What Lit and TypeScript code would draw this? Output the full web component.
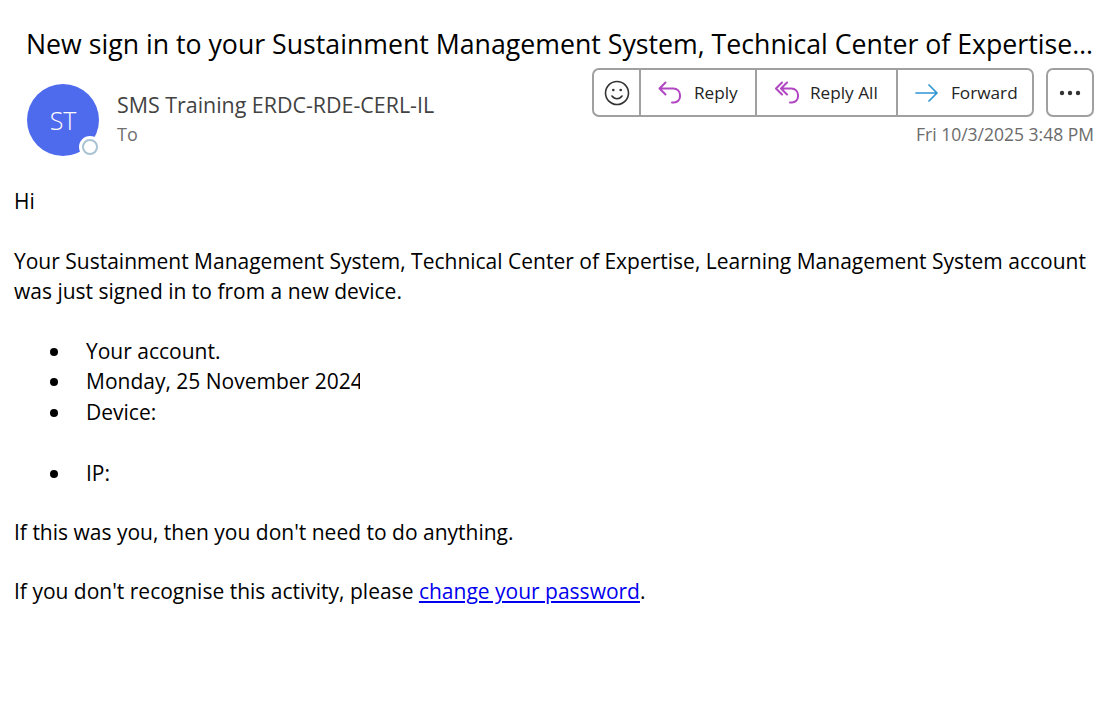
import { LitElement, html, css, svg } from 'lit';
import { customElement } from 'lit/decorators.js';

const replyArrow = svg`<path d="M7.500 1.500 1.500 7.500l6 6M1.500 7.500h14a6.500 6.500 0 0 1 6.500 6.500v1.500a6 6 0 0 1-6 6h-2" />`;
const replyAllArrow = svg`<path d="M7 1.500 1 7.500l6 6M12 1.500 6 7.500l6 6M6 7.500h10.500A6.500 6.500 0 0 1 23 14v1.500a6 6 0 0 1-6 6h-2" />`;

@customElement('app-root')
export class AppRoot extends LitElement {
  static styles = css`
    :host {
      display: block;
      width: 1117px;
      height: 703px;
      overflow: hidden;
      background: #fff;
      color: #000;
      font-family: 'Open Sans', 'Noto Sans', sans-serif;
    }

    .subject {
      margin: 0;
      padding: 26px 25px 0 26px;
      font-size: 26.7px;
      font-weight: 400;
      line-height: 36px;
      white-space: nowrap;
    }

    .header {
      display: flex;
      padding: 6px 23px 0 27px;
    }

    .avatar-wrap {
      position: relative;
      width: 72px;
      height: 72px;
      margin-top: 16px;
      flex: none;
    }

    .avatar {
      display: flex;
      align-items: center;
      justify-content: center;
      width: 72px;
      height: 72px;
      border-radius: 50%;
      background: #4f6bed;
      color: #fff;
      font-size: 25px;
      font-weight: 300;
    }

    .presence {
      position: absolute;
      right: -2px;
      bottom: -2px;
      box-sizing: border-box;
      width: 22px;
      height: 22px;
      border: 3px solid #fff;
      border-radius: 50%;
      background: #fff;
    }

    .presence::after {
      content: '';
      display: block;
      box-sizing: border-box;
      width: 16px;
      height: 16px;
      border: 2px solid #a9c3d3;
      border-radius: 50%;
    }

    .sender {
      flex: 1;
      padding: 23px 0 0 18px;
    }

    .name {
      color: #424242;
      font-size: 21.4px;
      line-height: 28px;
    }

    .to {
      margin-top: 3px;
      color: #707070;
      font-size: 18px;
      line-height: 24px;
    }

    .side {
      display: flex;
      flex-direction: column;
      align-items: flex-end;
    }

    .actions {
      display: flex;
      gap: 12px;
    }

    .group {
      display: flex;
      height: 49px;
      box-sizing: border-box;
      border: 2px solid #a0a0a0;
      border-radius: 7px;
    }

    .btn {
      display: flex;
      align-items: center;
      box-sizing: border-box;
      height: 100%;
      border-left: 2px solid #a0a0a0;
      color: #242424;
      font-size: 17.2px;
    }

    .btn:first-child {
      border-left: 0;
    }

    .emoji {
      justify-content: center;
      width: 45px;
    }

    .reply {
      width: 116px;
      padding-left: 17px;
      gap: 12px;
    }

    .reply-all {
      width: 141px;
      padding-left: 18px;
      gap: 11px;
    }

    .forward {
      width: 136px;
      padding-left: 17px;
      gap: 13px;
    }

    .more {
      justify-content: center;
      width: 44px;
    }

    .stamp {
      margin-top: 5px;
      color: #6b6b6b;
      font-size: 17.5px;
      line-height: 24px;
    }

    svg {
      display: block;
      flex: none;
      fill: none;
      stroke-linecap: round;
      stroke-linejoin: round;
    }

    .purple {
      stroke: #b146c2;
      stroke-width: 2;
    }

    .blue {
      stroke: #2e95d3;
      stroke-width: 1.7;
    }

    .body {
      padding: 30px 14px 0;
      font-size: 21px;
      line-height: 30px;
    }

    .body p {
      margin: 0 0 30px;
    }

    .body p.tight {
      margin-bottom: 29px;
    }

    ul {
      margin: 0 0 29px;
      padding: 0 0 0 36px;
      list-style: none;
    }

    li {
      display: flex;
    }

    li:nth-child(n + 3) {
      margin-top: 1px;
    }

    li::before {
      content: '';
      flex: none;
      width: 8px;
      height: 8px;
      margin: 12px 28px 0 0;
      border-radius: 50%;
      background: #000;
    }

    .clip {
      display: inline-block;
      width: 274px;
      overflow: hidden;
      white-space: nowrap;
    }

    a {
      color: #0000ee;
    }
  `;

  render() {
    return html`
      <h1 class="subject">New sign in to your Sustainment Management System, Technical Center of Expertise…</h1>
      <div class="header">
        <div class="avatar-wrap">
          <div class="avatar">ST</div>
          <div class="presence"></div>
        </div>
        <div class="sender">
          <div class="name">SMS Training ERDC-RDE-CERL-IL</div>
          <div class="to">To</div>
        </div>
        <div class="side">
          <div class="actions">
            <div class="group">
              <div class="btn emoji">
                <svg width="26" height="26" viewBox="0 0 26 26" stroke="#333" stroke-width="1.6">
                  <circle cx="13" cy="13" r="11.500" />
                  <path d="M8 16c1.200 1.800 3 2.700 5 2.700s3.800-.9 5-2.700" />
                  <circle cx="9.300" cy="10" r="1.300" fill="#333" stroke="none" />
                  <circle cx="16.700" cy="10" r="1.300" fill="#333" stroke="none" />
                </svg>
              </div>
              <div class="btn reply">
                <svg class="purple" width="24" height="24" viewBox="0 0 24 24">${replyArrow}</svg>
                Reply
              </div>
              <div class="btn reply-all">
                <svg class="purple" width="24" height="24" viewBox="0 0 24 24">${replyAllArrow}</svg>
                Reply All
              </div>
              <div class="btn forward">
                <svg class="blue" width="23" height="18" viewBox="0 0 23 18">
                  <path d="M1 9h21M14 1l8 8-8 8" />
                </svg>
                Forward
              </div>
            </div>
            <div class="group">
              <div class="btn more">
                <svg width="24" height="6" viewBox="0 0 24 6">
                  <circle cx="4" cy="3" r="2.200" fill="#333" />
                  <circle cx="12" cy="3" r="2.200" fill="#333" />
                  <circle cx="20" cy="3" r="2.200" fill="#333" />
                </svg>
              </div>
            </div>
          </div>
          <div class="stamp">Fri 10/3/2025 3:48 PM</div>
        </div>
      </div>
      <div class="body">
        <p>Hi</p>
        <p>Your Sustainment Management System, Technical Center of Expertise, Learning Management System account was just signed in to from a new device.</p>
        <ul>
          <li><span>Your account.</span></li>
          <li><span class="clip">Monday, 25 November 2024</span></li>
          <li><span>Device:<br /><br /></span></li>
          <li><span>IP:</span></li>
        </ul>
        <p class="tight">If this was you, then you don't need to do anything.</p>
        <p>If you don't recognise this activity, please <a href="#">change your password</a>.</p>
      </div>
    `;
  }
}
